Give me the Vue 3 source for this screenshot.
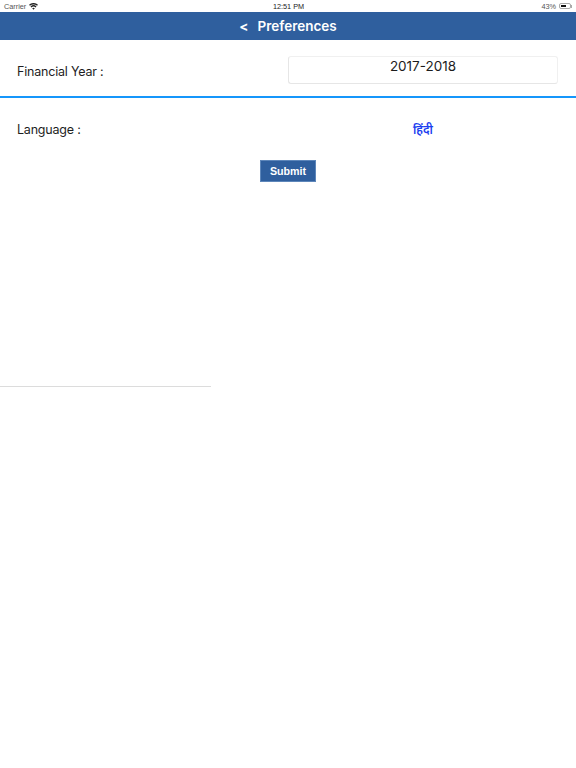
<script setup>
const financialYear = '2017-2018'
</script>

<template>
  <div class="page">
    <div class="status">
      <div class="status-left">
        <span>Carrier</span>
        <svg class="wifi" width="9" height="7" viewBox="0 0 18 14">
          <path d="M9 13.5 L6.4 10.6 A3.8 3.8 0 0 1 11.6 10.6 Z" fill="#222" />
          <path d="M4.8 8.9 L3 6.9 A8.8 8.8 0 0 1 15 6.9 L13.2 8.9 A6.2 6.2 0 0 0 4.8 8.9 Z" fill="#222" />
          <path d="M1.9 5.6 L0 3.6 A13 13 0 0 1 18 3.6 L16.1 5.6 A10.4 10.4 0 0 0 1.9 5.6 Z" fill="#222" />
        </svg>
      </div>
      <span class="status-time">12:51 PM</span>
      <div class="status-right">
        <span>43%</span>
        <span class="battery"><span class="battery-fill"></span></span>
        <span class="battery-cap"></span>
      </div>
    </div>

    <header class="nav">
      <span class="back">&lt;</span>
      <span>Preferences</span>
    </header>

    <section class="year-row">
      <span class="label year-label">Financial Year :</span>
      <div class="year-box">{{ financialYear }}</div>
    </section>

    <section class="lang-row">
      <span class="label">Language :</span>
      <a class="lang-link">हिंदी</a>
    </section>

    <div class="actions">
      <button class="submit">Submit</button>
    </div>

    <div class="rule"></div>
  </div>
</template>

<style scoped>
.page {
  width: 576px;
  height: 768px;
  background: #fff;
  font-family: Inter, "Liberation Sans", sans-serif;
  color: #1c1c1c;
  overflow: hidden;
}
.status {
  height: 12px;
  display: grid;
  grid-template-columns: 1fr auto 1fr;
  align-items: center;
  padding: 0 4px;
  font-family: "Liberation Sans", sans-serif;
  font-size: 7.3px;
  color: #555;
}
.status-left {
  display: flex;
  align-items: center;
  gap: 3px;
}
.status-time {
  color: #222;
  margin-left: 1px;
}
.status-right {
  display: flex;
  align-items: center;
  justify-content: flex-end;
}
.battery {
  width: 12px;
  height: 6px;
  margin-left: 3px;
  border: 1px solid #aaa;
  border-radius: 2px;
  padding: 1px;
  box-sizing: border-box;
  display: flex;
}
.battery-fill {
  width: 62%;
  background: #111;
}
.battery-cap {
  width: 1px;
  height: 3px;
  background: #aaa;
}
.nav {
  height: 28px;
  padding-bottom: 1px;
  background: #2f5f9e;
  color: #fff;
  display: flex;
  align-items: center;
  justify-content: center;
  gap: 9px;
  font-size: 13.5px;
  font-weight: 600;
  box-sizing: border-box;
}
.back {
  font-weight: 700;
}
.year-row {
  height: 52px;
  padding: 4px 18px 0 17px;
  display: flex;
  align-items: center;
  justify-content: space-between;
  border-bottom: 2px solid #1596fb;
  box-sizing: content-box;
}
.label {
  font-size: 12.5px;
  letter-spacing: -0.2px;
  color: #1e1e1e;
}
.year-label {
  margin-top: 2px;
}
.year-box {
  width: 270px;
  height: 28px;
  box-sizing: border-box;
  border: 1px solid #f0f0f0;
  border-bottom-color: #e6e6e6;
  border-left-color: #e6e6e6;
  border-radius: 3px;
  text-align: center;
  font-size: 13.5px;
  line-height: 18px;
}
.lang-row {
  height: 62px;
  display: grid;
  grid-template-columns: 271px 270px;
  align-items: center;
  padding-left: 17px;
}
.lang-link {
  text-align: center;
  color: #1c3ff0;
  font-size: 12px;
  font-weight: 600;
  font-family: "Noto Sans", "Noto Sans Devanagari", "Lohit Devanagari", sans-serif;
}
.actions {
  display: flex;
  justify-content: center;
}
.submit {
  width: 56px;
  height: 22px;
  border: 1px solid #5d86ba;
  background: #2f5f9e;
  color: #fff;
  font-family: "Liberation Sans", sans-serif;
  font-size: 10.7px;
  font-weight: 700;
  padding: 0;
}
.rule {
  width: 211px;
  height: 1px;
  margin-top: 204px;
  background: #dcdcdc;
}
</style>
